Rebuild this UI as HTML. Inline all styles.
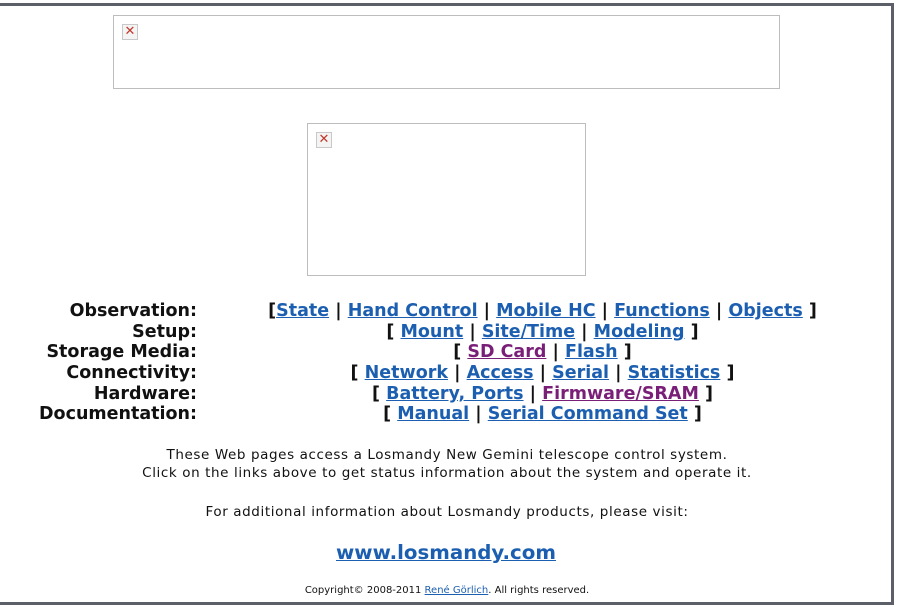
<!DOCTYPE html>
<html><head><meta charset="utf-8"><style>
html,body{margin:0;padding:0;background:#fff;width:900px;height:607px;overflow:hidden;font-family:"DejaVu Sans","Liberation Sans",sans-serif;}
.frame{position:absolute;left:-2px;top:3px;width:893px;height:596px;border-top:3px solid #5a5f68;border-right:3px solid #5a5f68;border-bottom:3px solid #5a5f68;}
.img{position:absolute;border:1px solid #bdbdbd;background:#fff;}
.x{position:absolute;left:8px;top:8px;width:14px;height:14px;border:1px solid #c8c8c8;background:#f4f4f4;color:#c0392b;font:bold 13px/14px "DejaVu Sans",sans-serif;text-align:center;}
.row{position:absolute;left:0;width:900px;height:21px;font-weight:bold;font-size:17.5px;line-height:21px;white-space:nowrap;}
.lab{position:absolute;right:703px;color:#111;}
.lnk{position:absolute;left:200px;width:685px;text-align:center;color:#111;}
a{color:#1c5fb0;text-decoration:underline;}
a.v{color:#7a1f78;}
.t{position:absolute;left:0;width:900px;text-align:center;color:#111;font-size:13.5px;letter-spacing:0.6px;white-space:nowrap;}
</style></head><body>
<div class="frame"></div>
<div class="img" style="left:113px;top:15px;width:665px;height:72px"><div class="x">✕</div></div>
<div class="img" style="left:307px;top:123px;width:277px;height:151px"><div class="x">✕</div></div>

<div class="row" style="top:301px"><span class="lab">Observation:</span><span class="lnk">[<a>State</a> | <a>Hand Control</a> | <a>Mobile HC</a> | <a>Functions</a> | <a>Objects</a> ]</span></div>
<div class="row" style="top:322px"><span class="lab">Setup:</span><span class="lnk">[ <a>Mount</a> | <a>Site/Time</a> | <a>Modeling</a> ]</span></div>
<div class="row" style="top:342px"><span class="lab">Storage Media:</span><span class="lnk">[ <a class="v">SD Card</a> | <a>Flash</a> ]</span></div>
<div class="row" style="top:363px"><span class="lab">Connectivity:</span><span class="lnk">[ <a>Network</a> | <a>Access</a> | <a>Serial</a> | <a>Statistics</a> ]</span></div>
<div class="row" style="top:384px"><span class="lab">Hardware:</span><span class="lnk">[ <a>Battery, Ports</a> | <a class="v">Firmware/SRAM</a> ]</span></div>
<div class="row" style="top:404px"><span class="lab">Documentation:</span><span class="lnk">[ <a>Manual</a> | <a>Serial Command Set</a> ]</span></div>

<div class="t" style="top:447px;left:-3px">These Web pages access a Losmandy New Gemini telescope control system.</div>
<div class="t" style="top:465px;left:-3px">Click on the links above to get status information about the system and operate it.</div>
<div class="t" style="top:504px;left:-3px">For additional information about Losmandy products, please visit:</div>
<div class="t" style="top:541px;left:-4px;font-size:19.8px;font-weight:bold;letter-spacing:0"><a>www.losmandy.com</a></div>
<div class="t" style="top:585px;left:-3px;font-size:10px;letter-spacing:0">Copyright© 2008-2011 <a>René Görlich</a>. All rights reserved.</div>
</body></html>
